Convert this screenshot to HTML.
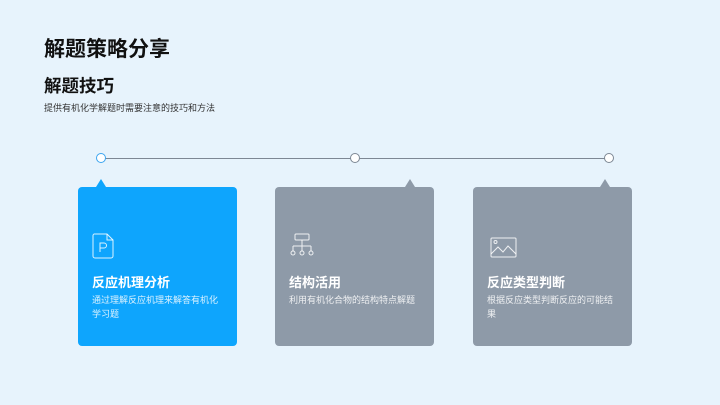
<!DOCTYPE html>
<html><head><meta charset="utf-8"><style>
*{margin:0;padding:0;box-sizing:border-box}
body{width:720px;height:405px;background:#e7f3fc;font-family:"Liberation Sans","Noto Sans CJK SC",sans-serif;position:relative;overflow:hidden;color:#111}
.a{position:absolute}
h1{position:absolute;left:44px;top:33px;font-size:21px;font-weight:700;letter-spacing:0px}
h2{position:absolute;left:44px;top:73px;font-size:17.5px;font-weight:700}
.sub{left:44px;top:101px;font-size:9px;color:#333}
.line{left:101px;top:158px;width:508px;height:1px;background:#7d8794}
.dot{width:10px;height:10px;border-radius:50%;border:1px solid #7d8794;background:#fff;top:153px}
.card{top:187px;width:159px;height:159px;border-radius:4px;color:#fff}
.tri{top:179px;width:0;height:0;border-left:5px solid transparent;border-right:5px solid transparent;border-bottom:8px solid}
.t{position:absolute;left:14px;top:85px;font-size:13px;font-weight:700}
.d{position:absolute;left:14px;top:106px;width:128px;font-size:9px;line-height:14px;color:rgba(255,255,255,.85)}
.ic{position:absolute;left:14px;top:46px}
</style></head><body>
<h1>解题策略分享</h1>
<h2>解题技巧</h2>
<div class="a sub">提供有机化学解题时需要注意的技巧和方法</div>
<div class="a line"></div>
<div class="a dot" style="left:96px;border-color:#3ba5f0"></div>
<div class="a dot" style="left:350px"></div>
<div class="a dot" style="left:604px"></div>

<div class="a tri" style="left:96px;border-bottom-color:#0ea5fd"></div>
<div class="a card" style="left:78px;background:#0ea5fd">
<svg class="ic" width="24" height="26" viewBox="0 0 24 26" fill="none" stroke="#fff" stroke-opacity=".85" stroke-width="1"><path d="M2 1h13l6 6v16a2 2 0 0 1-2 2H3a2 2 0 0 1-2-2V3a2 2 0 0 1 1-2z"/><path d="M15 1v6h6"/><path d="M8 19V10h4a2.5 2.5 0 0 1 0 5H8"/></svg>
<div class="t">反应机理分析</div>
<div class="d">通过理解反应机理来解答有机化学习题</div>
</div>

<div class="a tri" style="left:405px;border-bottom-color:#8e9aa8"></div>
<div class="a card" style="left:275px;background:#8e9aa8">
<svg class="ic" width="26" height="26" viewBox="0 0 26 26" fill="none" stroke="#fff" stroke-opacity=".85" stroke-width="1"><rect x="6" y="1" width="14" height="6" rx="1"/><path d="M13 7v6M4 13h18M4 13v5M13 13v5M22 13v5"/><circle cx="4" cy="20" r="2"/><circle cx="13" cy="20" r="2"/><circle cx="22" cy="20" r="2"/></svg>
<div class="t">结构活用</div>
<div class="d">利用有机化合物的结构特点解题</div>
</div>

<div class="a tri" style="left:600px;border-bottom-color:#8e9aa8"></div>
<div class="a card" style="left:473px;background:#8e9aa8">
<svg class="ic" style="left:17px;top:50px" width="27" height="21" viewBox="0 0 27 21" fill="none" stroke="#fff" stroke-opacity=".85" stroke-width="1"><rect x="1" y="1" width="25" height="19" rx="1"/><circle cx="5.5" cy="5" r="1.5"/><path d="M1 17l7-7 5 5 5-6 8 8"/></svg>
<div class="t">反应类型判断</div>
<div class="d">根据反应类型判断反应的可能结果</div>
</div>
</body></html>
